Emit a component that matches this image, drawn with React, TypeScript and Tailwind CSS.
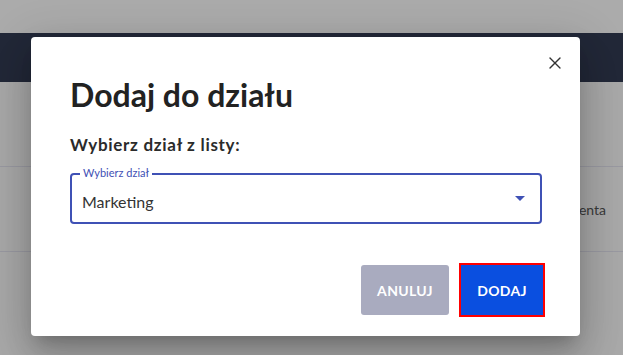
import { X } from "lucide-react";

export default function App() {
    return (
        <div className="relative w-[623px] h-[355px] overflow-hidden bg-[#a9a9a9] font-['Lato',sans-serif]">
            {/* Page behind the overlay */}
            <div className="h-[33px] bg-[#ababab]" />
            <div className="h-[49px] bg-[#222838]" />
            <div className="h-[85px] border-b border-[#9a9aa2]" />
            <div className="h-[85px] border-b border-[#9a9aa2] flex items-center justify-end pr-[17px] text-[14px] text-[#3a3a3a]">
                Klienta
            </div>

            {/* Dialog */}
            <div className="absolute left-[31px] top-[37px] w-[549px] h-[299px] bg-white rounded-[4px] shadow-[0_11px_15px_-7px_rgba(0,0,0,0.2),0_24px_38px_3px_rgba(0,0,0,0.14),0_9px_46px_8px_rgba(0,0,0,0.12)] pl-[39px] pr-[38px] pt-[38px] flex flex-col">
                <button className="absolute right-[15px] top-[16px] w-[20px] h-[20px] flex items-center justify-center text-[#333]">
                    <X size={20} strokeWidth={1.6} />
                </button>

                <h2 className="text-[32px] leading-[40px] font-bold text-[#222]">Dodaj do działu</h2>

                <p className="mt-[20px] text-[17px] leading-[20px] font-bold tracking-[0.7px] text-[#2b2b2b]">Wybierz dział z listy:</p>

                <div className="relative mt-[18px] h-[51px] w-[472px] border-2 border-[#3f51b5] rounded-[4px] flex items-center pl-[10px] pr-[15px]">
                    <span className="absolute left-[8px] -top-[9px] px-[3px] bg-white text-[11px] leading-[14px] text-[#3f51b5]">
                        Wybierz dział
                    </span>
                    <span className="flex-1 text-[16px] text-[#333] pt-[7px]">Marketing</span>
                    <svg width="10" height="5" viewBox="0 0 10 5" className="fill-[#3f51b5]">
                        <path d="M0 0h10L5 5z" />
                    </svg>
                </div>

                <div className="mt-auto mb-[21px] -mr-[1px] flex justify-end gap-[12px]">
                    <button className="w-[88px] h-[50px] rounded-[3px] bg-[#a9abbf] text-white text-[14px] font-bold tracking-[0.3px]">
                        ANULUJ
                    </button>
                    <button className="w-[82px] h-[50px] bg-[#0a4fe0] text-white text-[14px] font-bold tracking-[0.3px] outline-2 outline-[#ff0000]">
                        DODAJ
                    </button>
                </div>
            </div>
        </div>
    );
}
